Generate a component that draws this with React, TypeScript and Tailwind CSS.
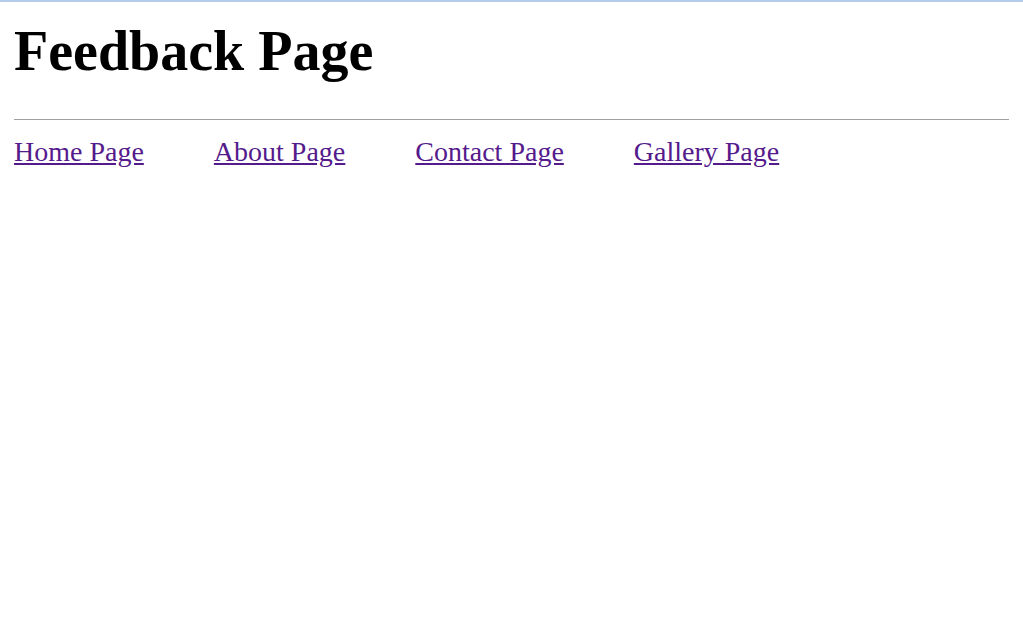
export default function App() {
  const links = ["Home Page", "About Page", "Contact Page", "Gallery Page"];
  return (
    <div className="min-h-[626px] border-t-2 border-[#b4cbea] bg-white px-[14px] font-['Liberation_Serif',serif] text-black">
      <h1 className="mt-[7px] text-[56px] font-bold leading-normal">Feedback Page</h1>
      <hr className="mt-[26px] border-t border-[#a0a0a0]" />
      <nav className="mt-[11px] flex gap-[70px] text-[28px] leading-normal">
        {links.map((l) => (
          <a key={l} href="#" className="text-[#551a8b] underline">
            {l}
          </a>
        ))}
      </nav>
    </div>
  );
}
